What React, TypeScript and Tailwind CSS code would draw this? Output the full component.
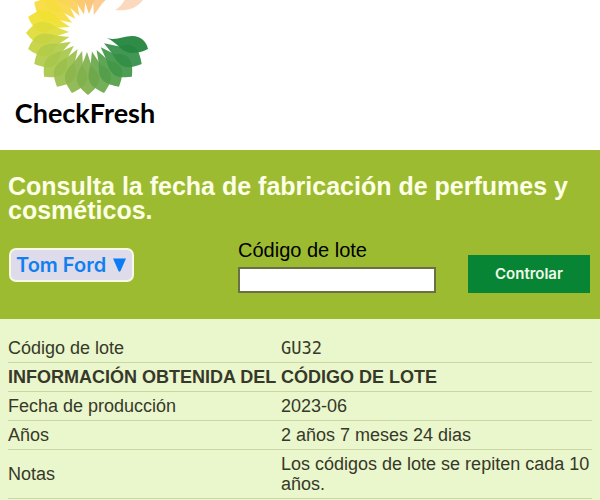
import { useState } from "react";

interface ResultRow {
  label: string;
  value: string;
  mono?: boolean;
}

const PETAL = "M19 1L34-4C38-9 42-12 48-11C53-10 58-5 62 0C58 5 53 10 48 11C42 12 37 9 32 6Z";

const petals = [
  { angle: 285, color: "#fbc98b" },
  { angle: 270, color: "#fac26f" },
  { angle: 255, color: "#fbc766" },
  { angle: 240, color: "#fbd05c" },
  { angle: 225, color: "#fad84c" },
  { angle: 210, color: "#f7dd3c" },
  { angle: 195, color: "#f0e130" },
  { angle: 180, color: "#dfdb38" },
  { angle: 165, color: "#c5d240" },
  { angle: 150, color: "#b3cb48" },
  { angle: 135, color: "#a8c64a" },
  { angle: 120, color: "#9cc04b" },
  { angle: 105, color: "#8bb64c" },
  { angle: 90, color: "#7fb04c" },
  { angle: 75, color: "#6ba84b" },
  { angle: 60, color: "#539e49" },
  { angle: 45, color: "#409648" },
  { angle: 30, color: "#338f46" },
];

const dateRows: ResultRow[] = [
  { label: "Fecha de producción", value: "2023-06" },
  { label: "Años", value: "2 años 7 meses 24 dias" },
  { label: "Notas", value: "Los códigos de lote se repiten cada 10 años." },
];

function Logo() {
  return (
    <a aria-label="CheckFresh" className="flex w-[170px] flex-col items-center" href="#">
      <svg aria-hidden="true" className="block h-[97px] w-[170px]" viewBox="0 0 170 97">
        <path d="M115 10C121 7 124 1 127-4L146-5C141 5 132 12 115 10Z" fill="#fbd9bf" />
        {petals.map((petal) => (
          <path
            d={PETAL}
            fill={petal.color}
            fillOpacity="0.93"
            key={petal.angle}
            transform={`translate(88 33) rotate(${petal.angle})`}
          />
        ))}
        <path
          d="M107 38C116 41 123 36 132 36C142 36 147 43 148 49C142 52 137 53 131 53C121 52 119 44 107 38Z"
          fill="#268641"
          fillOpacity="0.96"
        />
      </svg>
      <span className="font-['Lato',sans-serif] text-[27px] leading-8 font-bold text-black">
        CheckFresh
      </span>
    </a>
  );
}

function Row({ label, value, mono }: ResultRow) {
  return (
    <tr className="border-b border-[#cbd6a2]">
      <th className="w-[273px] py-1 text-left font-normal" scope="row">
        {label}
      </th>
      <td className={mono ? "py-1 font-['DejaVu_Sans_Mono',monospace] text-[17px]" : "py-1"}>
        {value}
      </td>
    </tr>
  );
}

export default function App() {
  const [brand, setBrand] = useState("tom-ford");
  const [code, setCode] = useState("");

  return (
    <div className="min-h-screen bg-[#eaf6cb] font-['Liberation_Sans',Arial,sans-serif]">
      <header className="h-[150px] bg-white">
        <Logo />
      </header>

      <section className="bg-[#9cbb31] px-2 pt-6 pb-[26px]">
        <h1 className="text-[25px] leading-6 font-bold text-[#fdffe6]">
          Consulta la fecha de fabricación de perfumes y cosméticos.
        </h1>
        <form
          className="mt-4 flex items-end pr-[2px]"
          onSubmit={(event) => event.preventDefault()}
        >
          <div className="relative mr-auto mb-[11px] ml-px">
            <select
              aria-label="Marca"
              className="block h-[34px] w-[125px] appearance-none rounded-[7px] border-2 border-[#f7f9e6] bg-[#dedbea] pl-[5px] font-['Inter',sans-serif] text-xl leading-6 font-semibold text-[#117ff0]"
              onChange={(event) => setBrand(event.target.value)}
              value={brand}
            >
              <option value="tom-ford">Tom Ford</option>
            </select>
            <svg
              aria-hidden="true"
              className="pointer-events-none absolute top-[10px] right-2 h-[14px] w-[13px]"
              viewBox="0 0 13 14"
            >
              <path d="M0 0.5H13L7.5 13Q6.5 14.5 5.5 13Z" fill="#0a7cf5" />
            </svg>
          </div>
          <label className="mr-8 flex w-[198px] flex-col gap-[5px] text-xl leading-6 text-black">
            Código de lote
            <input
              className="h-[26px] w-full border-2 border-[#6a7044] bg-white px-1 text-base"
              onChange={(event) => setCode(event.target.value)}
              type="text"
              value={code}
            />
          </label>
          <button
            className="h-[38px] w-[122px] bg-[#088534] font-['Inter',sans-serif] text-[15px] font-semibold text-[#eefbe8]"
            type="submit"
          >
            Controlar
          </button>
        </form>
      </section>

      <main className="px-2 pt-[15px]">
        <table className="w-full border-collapse text-[18px] leading-5 text-[#36392a]">
          <tbody>
            <Row label="Código de lote" mono value="GU32" />
            <tr className="border-b border-[#cbd6a2]">
              <th className="py-1 text-left font-bold" colSpan={2} scope="colgroup">
                INFORMACIÓN OBTENIDA DEL CÓDIGO DE LOTE
              </th>
            </tr>
            {dateRows.map((row) => (
              <Row key={row.label} {...row} />
            ))}
          </tbody>
        </table>
      </main>
    </div>
  );
}
